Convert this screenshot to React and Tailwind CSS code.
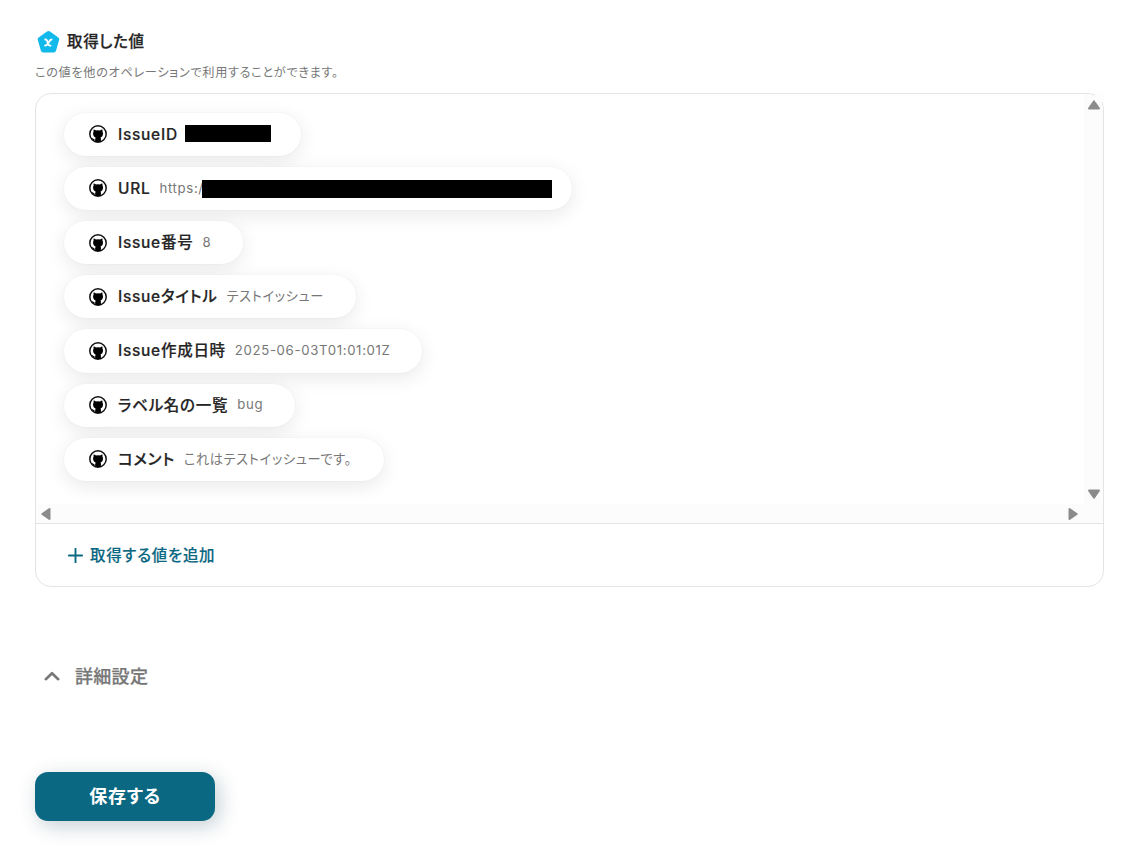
import clsx from 'clsx';

const VALUES = [
  { label: 'IssueID', width: 'w-[237px]', mask: 'w-[86px] h-[17px] ml-[7px] mb-px' },
  { label: 'URL', value: 'https:/', width: 'w-[508px]', mask: 'w-[350px] h-[18px] -ml-0.5 mt-px' },
  { label: 'Issue番号', value: '8', width: 'w-[179px]' },
  { label: 'Issueタイトル', value: 'テストイッシュー', width: 'w-[292px]' },
  { label: 'Issue作成日時', value: '2025-06-03T01:01:01Z', width: 'w-[358px]' },
  { label: 'ラベル名の一覧', value: 'bug', width: 'w-[231px]' },
  { label: 'コメント', value: 'これはテストイッシューです。', width: 'w-[320px]' },
];

const GithubMark = () => (
  <svg className="h-[18px] w-[18px] shrink-0" viewBox="0 0 18 18" aria-hidden="true">
    <circle cx="9" cy="9" r="8.2" fill="none" stroke="#111" strokeWidth="1.5" />
    <path
      d="M4.700 4.600c.9.100 1.600.5 2.200.9a8 8 0 0 1 4.200 0c.6-.4 1.300-.8 2.200-.9.3.9.3 1.500.2 2.100.5.7.6 1.400.5 2.300-.2 1.900-1 3-2.500 3.500.3.4.4.8.4 1.300V17H6.300v-1.500c-1.300.2-2-.1-2.500-.9-.3-.5-.7-.9-1.100-1.200.9-.2 1.500.2 2 .7.5.5 1 .6 1.600.5 0-.8.1-1.500.300-2-1.500-.5-2.300-1.700-2.500-3.600-.1-.8 0-1.600.5-2.300-.1-.6-.2-1.200.1-2.100z"
      fill="#000"
    />
  </svg>
);

const ValueBadge = () => (
  <svg className="h-6 w-6" viewBox="0 0 24 24" aria-hidden="true">
    <path
      d="M11 1.500a2.500 2.500 0 0 1 3 0l8.300 5.900a2.300 2.300 0 0 1 .8 2.700l-3.100 10.700a2.300 2.300 0 0 1-2.200 1.700H7.100a2.300 2.300 0 0 1-2.200-1.700L1.800 10.100a2.300 2.300 0 0 1 .8-2.700z"
      fill="#12b9eb"
    />
    <path
      d="M9.200 9.500h.5c.7 0 1 .4 1.300 1.100l1.400 3.800c.3.800.7 1.200 1.400 1.200h.8M15.600 9.500c-1.300 0-1.900 1-3 3-1.100 2-1.800 3.100-3.600 3.100"
      fill="none"
      stroke="#fff"
      strokeWidth="1.800"
      strokeLinecap="round"
    />
  </svg>
);

const Arrow = ({ className }) => (
  <svg className={clsx('h-3 w-3.5', className)} viewBox="0 0 14 12" aria-hidden="true">
    <path d="M7 2.300 2 9.500h10z" fill="#8b8b8b" stroke="#8b8b8b" strokeWidth="2" strokeLinejoin="round" />
  </svg>
);

const ValuePill = ({ label, value, width, mask }) => (
  <li
    className={clsx(
      'flex h-[43.2px] shrink-0 items-center rounded-full bg-white pl-[25px] shadow-[0_5px_20px_rgba(0,0,0,0.09),0_0_2px_rgba(0,0,0,0.05)]',
      width
    )}
  >
    <GithubMark />
    <span className="ml-[11px] whitespace-nowrap text-[15.5px] font-medium tracking-[0.72px] text-[#252525] [-webkit-text-stroke:0.2px]">
      {label}
    </span>
    {value && (
      <span className="ml-[9px] whitespace-nowrap text-[13.2px] tracking-[0.66px] text-[#777]">{value}</span>
    )}
    {mask && <span className={clsx('shrink-0 bg-black', mask)} />}
  </li>
);

const App = () => {
  return (
    <main className="h-[854px] overflow-hidden bg-white px-[35px] pt-[30px] font-[Inter,'Noto_Sans_CJK_JP',sans-serif] [font-feature-settings:'palt']">
      <header>
        <h2 className="flex h-6 items-center pl-px text-[15.5px] font-medium tracking-[0.65px] text-[#252525] [-webkit-text-stroke:0.25px]">
          <ValueBadge />
          <span className="ml-[7px]">取得した値</span>
        </h2>
        <p className="mt-[10px] h-[18px] text-[12.2px] leading-[18px] tracking-[0.65px] text-[#777]">
          この値を他のオペレーションで利用することができます。
        </p>
      </header>

      <section className="relative mt-[11px] h-[494px] w-[1069px] rounded-2xl border border-[#e4e4e4] bg-white">
        <div className="grid h-[430px] grid-cols-[1fr_19px] grid-rows-[410px_19px] border-b border-[#e4e4e4]">
          <ul className="flex flex-col gap-[11px] overflow-hidden rounded-tl-2xl pl-7 pt-[18.700px]">
            {VALUES.map((item) => (
              <ValuePill key={item.label} {...item} />
            ))}
          </ul>
          <div className="flex flex-col items-center justify-between rounded-tr-2xl bg-[#fcfcfc] pb-1 pt-[5px]">
            <Arrow />
            <Arrow className="rotate-180" />
          </div>
          <div className="flex items-center justify-between bg-[#fcfcfc] pl-[3px] pr-1">
            <Arrow className="-rotate-90" />
            <Arrow className="rotate-90" />
          </div>
          <div className="bg-[#fcfcfc]" />
        </div>
        {/* scrollbar track runs square over the rounded corner */}
        <span className="absolute -right-px -top-px h-[9px] w-[9px] bg-[#fdfdfd]" />
        <button className="flex h-[62px] items-center pl-8 text-[15.5px] font-medium tracking-[0.7px] text-[#0b6882] [-webkit-text-stroke:0.15px]">
          <svg className="h-[15px] w-[15px]" viewBox="0 0 15 15" aria-hidden="true">
            <path d="M7.500.8v13.400M.8 7.500h13.400" stroke="currentColor" strokeWidth="1.900" strokeLinecap="round" />
          </svg>
          <span className="ml-[7px] mt-px">取得する値を追加</span>
        </button>
      </section>

      <button className="mt-[75px] flex h-7 items-center pl-[9px] text-[18px] font-medium tracking-[0.3px] text-[#777] [-webkit-text-stroke:0.25px]">
        <svg className="h-[10px] w-4" viewBox="0 0 16 10" aria-hidden="true">
          <path
            d="m1.800 8.200 6.200-6 6.200 6"
            fill="none"
            stroke="currentColor"
            strokeWidth="2.600"
            strokeLinecap="round"
            strokeLinejoin="round"
          />
        </svg>
        <span className="ml-[15px]">詳細設定</span>
      </button>

      <button className="mt-[82px] flex h-[49px] w-[180px] items-center justify-center rounded-[13px] bg-[#0b6882] text-[18px] font-bold tracking-[0.7px] text-white shadow-[4px_5px_20px_rgba(10,50,70,0.24)]">
        保存する
      </button>
    </main>
  );
};

export default App;
